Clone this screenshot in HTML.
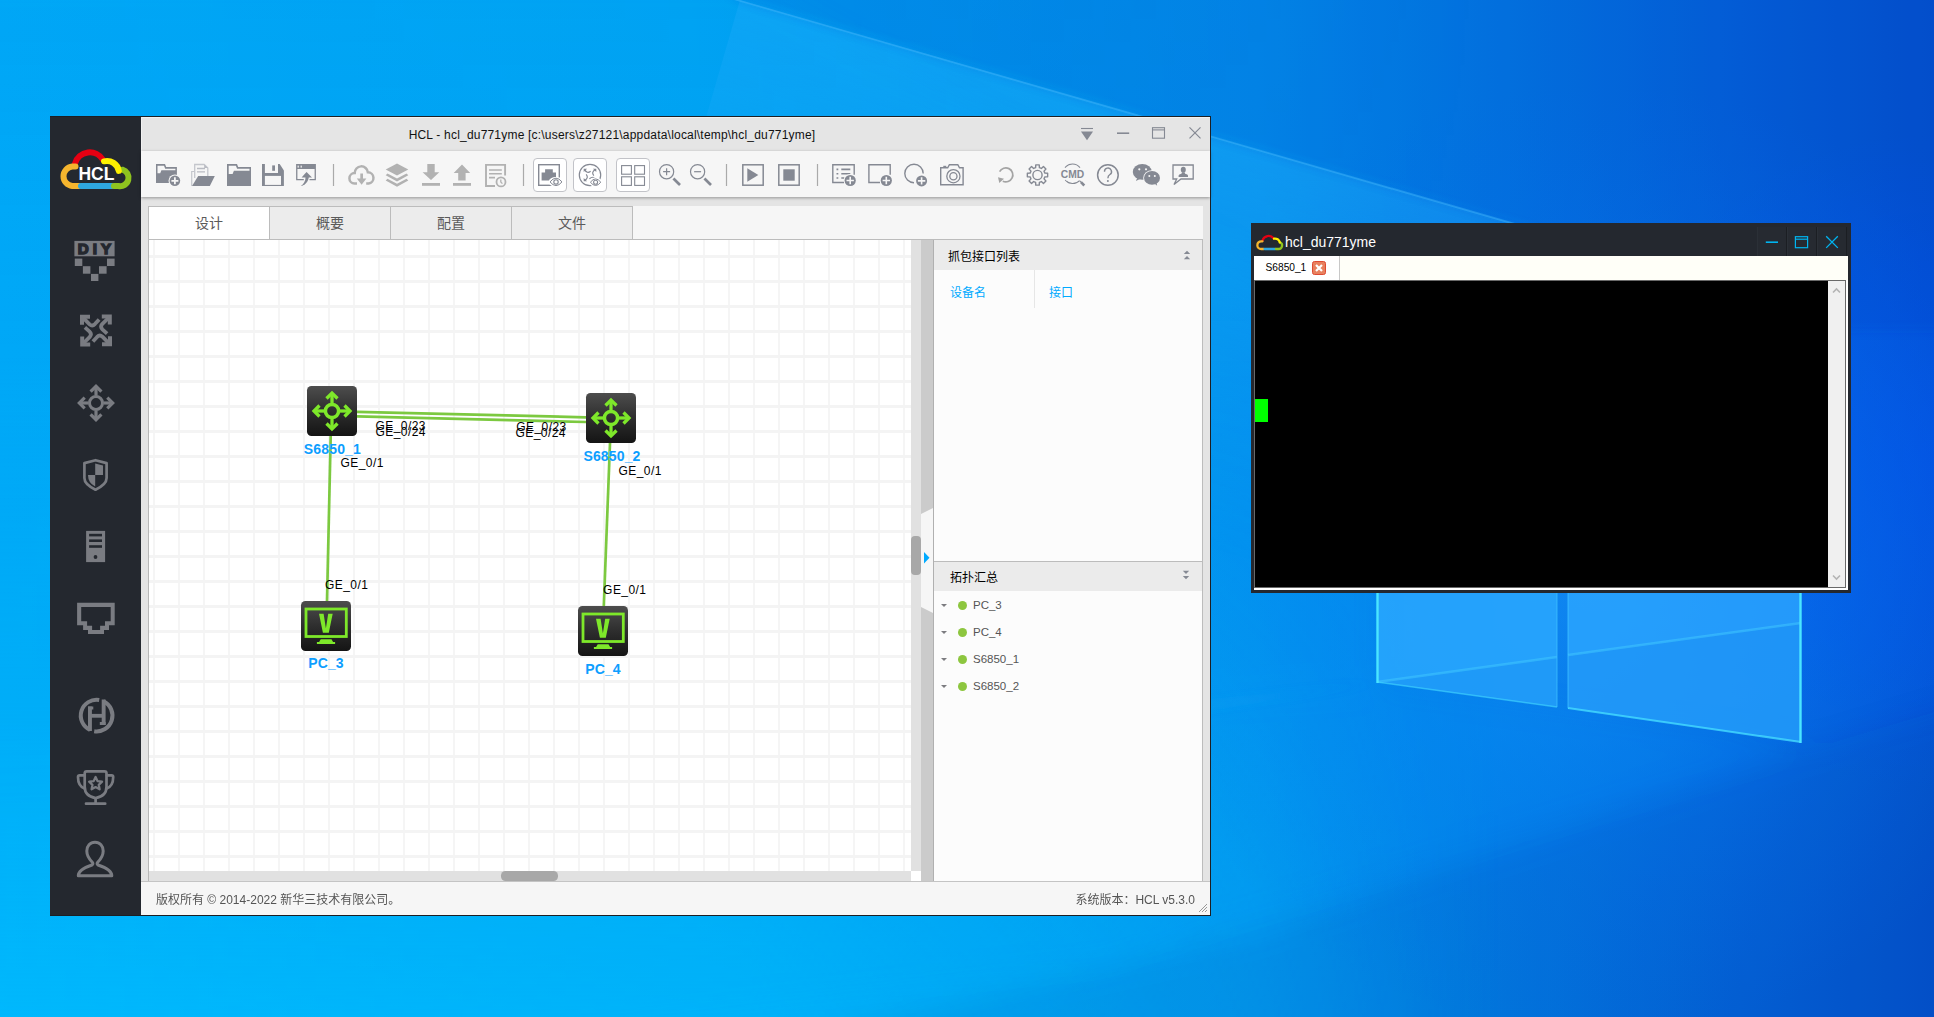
<!DOCTYPE html>
<html lang="zh-CN">
<head>
<meta charset="utf-8">
<title>HCL</title>
<style>
*{box-sizing:border-box;margin:0;padding:0}
html,body{width:1934px;height:1017px;overflow:hidden}
body{position:relative;font-family:"Liberation Sans","Noto Sans CJK SC",sans-serif;font-size:12px;color:#333;
background:#0a8ee8;}
.abs{position:absolute}
#wall{position:absolute;left:0;top:0;width:1934px;height:1017px}
/* HCL window */
#hcl{position:absolute;left:50px;top:116px;width:1161px;height:800px;background:#e4e4e4}
#hcl .frame{position:absolute;left:0;top:0;width:1161px;height:800px;border:1px solid #1c1f24;border-left:none;pointer-events:none}
#side{position:absolute;left:0;top:0;width:91px;height:799px;background:#24282f}
#title{position:absolute;left:91px;top:0;width:1069px;height:35px;background:#e5e5e5;border-top:2px solid #f1f1f1;border-left:1px solid #f1f1f1}
#title .t{position:absolute;left:-1px;width:942px;top:10px;text-align:center;font-size:12px;color:#111;letter-spacing:0.2px;white-space:nowrap}
#tool{position:absolute;left:91px;top:35px;width:1069px;height:46px;background:#f6f6f6;box-shadow:0 1px 3px rgba(0,0,0,.35)}
#tabs{position:absolute;left:98px;top:90px;height:34px;width:1055px;background:#f6f6f6;border-bottom:1px solid #bcbcbc}
.tab{position:absolute;top:0;height:34px;width:121px;background:#ececec;border:1px solid #bcbcbc;border-left:none;text-align:center;line-height:32px;font-size:14px;color:#5a5a5a}
.tab.on{background:#fff;border-left:1px solid #bcbcbc}
#canvas{position:absolute;left:99px;top:124px;width:762px;height:631px;background:#fff;overflow:hidden}
#cleft{position:absolute;left:98px;top:124px;width:1px;height:642px;background:#b8b8b8}
#vs{position:absolute;left:861px;top:124px;width:10px;height:631px;background:#e1e1e1}
#vs i{position:absolute;left:0;top:296px;width:10px;height:39px;border-radius:4px;background:#a8a8a8}
#hs{position:absolute;left:99px;top:755px;width:762px;height:10px;background:#e1e1e1}
#hs i{position:absolute;left:352px;top:0;width:57px;height:10px;border-radius:4.5px;background:#a8a8a8}
#corner{position:absolute;left:861px;top:755px;width:10px;height:10px;background:#fff}
#split{position:absolute;left:871px;top:124px;width:12px;height:642px;background:#cbcbcb}
#rb{position:absolute;left:883px;top:124px;width:1px;height:642px;background:#b0b0b0}
#status{position:absolute;left:91px;top:765px;width:1069px;height:34px;background:#f6f6f6;border-top:1px solid #c4c4c4;font-size:12px;color:#555;line-height:36px}
#status .l{position:absolute;left:15px;top:0;white-space:nowrap}
#status .r{position:absolute;right:15px;top:0;white-space:nowrap}
#right{position:absolute;left:884px;top:124px;width:269px;height:641px;background:#fcfcfc;border-right:1px solid #bcbcbc;font-size:12px}
.ph{position:absolute;left:0;width:268px;height:30px;background:#ebebeb;color:#000;line-height:30px;padding-left:14px}
.col{position:absolute;top:30px;height:38px;line-height:46px;color:#00aaff;padding-left:16px}
.row{position:absolute;left:0;width:268px;height:27px;line-height:27px;color:#555;font-size:11.5px}
.row .a{position:absolute;left:7px;top:12px;width:0;height:0;border-left:3.5px solid transparent;border-right:3.5px solid transparent;border-top:3.5px solid #7c7c80}
.row .d{position:absolute;left:24px;top:9px;width:9px;height:9px;border-radius:50%;background:#8dc63f}
.row .n{position:absolute;left:39px;top:0}
/* terminal */
#term{position:absolute;left:1251px;top:223px;width:600px;height:370px;background:#24282f}
#term .tt{position:absolute;left:34px;top:11px;font-size:14px;color:#fff;white-space:nowrap;line-height:16px}
#term .btn{position:absolute;top:4px;width:30px;height:29px;background:#262a31;border-right:1px solid #1b1e23;border-left:1px solid #2b3037}
#term .in{position:absolute;left:3px;top:33px;width:594px;height:334px;background:#fff}
#term .tabbar{position:absolute;left:0;top:0;width:594px;height:24px;background:#fffff8}
#term .tab1{position:absolute;left:0;top:0;width:86px;height:24px;background:#fff;border-right:1px solid #c8c8c8;font-size:10.2px;color:#000;line-height:24px;padding-left:11.5px}
#term .x{position:absolute;left:58px;top:5px;width:14px;height:14px;border-radius:2.5px;background:#e8805e;border:1px solid #de4a32}
#term .scr{position:absolute;left:0;top:24px;width:592px;height:308px;background:#000;border-left:1px solid #696969;border-top:1px solid #696969;border-right:1px solid #696969;border-bottom:1px solid #696969}
#term .sb{position:absolute;right:0;top:0;width:17px;height:306px;background:#f0f0f0}
#term .cur{position:absolute;left:0;top:118px;width:13px;height:23px;background:#00ff00}
</style>
</head>
<body>
<svg id="wall" viewBox="0 0 1934 1017">
<defs>
<linearGradient id="bg" x1="0" x2="1934" y1="0" y2="0" gradientUnits="userSpaceOnUse">
 <stop offset="0" stop-color="#00a8f6"/>
 <stop offset="0.36" stop-color="#00a2f2"/>
 <stop offset="0.52" stop-color="#029aee"/>
 <stop offset="0.65" stop-color="#0492ec"/>
 <stop offset="0.78" stop-color="#037ae2"/>
 <stop offset="0.90" stop-color="#0462d8"/>
 <stop offset="1" stop-color="#0452cc"/>
</linearGradient>
<linearGradient id="lowL" x1="0" x2="0" y1="0" y2="1017" gradientUnits="userSpaceOnUse">
 <stop offset="0" stop-color="#0a90ea" stop-opacity="0.06"/>
 <stop offset="0.35" stop-color="#00b0f8" stop-opacity="0"/>
 <stop offset="1" stop-color="#00c0ff" stop-opacity="0.72"/>
</linearGradient>
<linearGradient id="fadeR" x1="0" x2="1500" y1="0" y2="0" gradientUnits="userSpaceOnUse">
 <stop offset="0" stop-color="#fff" stop-opacity="1"/>
 <stop offset="0.5" stop-color="#fff" stop-opacity="0.8"/>
 <stop offset="1" stop-color="#fff" stop-opacity="0"/>
</linearGradient>
<radialGradient id="glow" cx="1600" cy="560" r="480" gradientUnits="userSpaceOnUse">
 <stop offset="0" stop-color="#1a96ff" stop-opacity="0.62"/>
 <stop offset="0.5" stop-color="#0880f6" stop-opacity="0.36"/>
 <stop offset="1" stop-color="#0470ee" stop-opacity="0"/>
</radialGradient>
<radialGradient id="glowR" cx="1930" cy="460" r="330" gradientUnits="userSpaceOnUse">
 <stop offset="0" stop-color="#0050ff" stop-opacity="0.36"/>
 <stop offset="0.6" stop-color="#0050ff" stop-opacity="0.20"/>
 <stop offset="1" stop-color="#0050ff" stop-opacity="0"/>
</radialGradient>
<linearGradient id="rayg" x1="1100" y1="104" x2="989" y2="488" gradientUnits="userSpaceOnUse">
 <stop offset="0" stop-color="#30b0ff" stop-opacity="0.26"/>
 <stop offset="0.5" stop-color="#30b0ff" stop-opacity="0.10"/>
 <stop offset="1" stop-color="#30b0ff" stop-opacity="0"/>
</linearGradient>
<mask id="mL"><rect x="0" y="0" width="1500" height="1017" fill="url(#fadeR)"/></mask>
<filter id="bl" x="-10%" y="-10%" width="120%" height="120%"><feGaussianBlur stdDeviation="14"/></filter>
<filter id="bl2" x="-10%" y="-10%" width="120%" height="120%"><feGaussianBlur stdDeviation="5"/></filter>
</defs>
<rect width="1934" height="1017" fill="url(#bg)"/>
<rect x="0" y="0" width="1500" height="1017" fill="url(#lowL)" mask="url(#mL)"/>
<rect width="1934" height="1017" fill="url(#glow)"/>
<rect x="1500" y="100" width="434" height="720" fill="url(#glowR)"/>
<g filter="url(#bl)">
<!-- light wedge spreading left from logo -->
<polygon points="1377,330 740,-20 -40,-20 -40,780 1377,690" fill="#18b0ff" opacity="0.11"/>
<!-- floor wedge: lighter between bottom rays -->
<polygon points="1377,684 1801,744 1100,960 300,1060 -40,1060 -40,770" fill="#18b0ff" opacity="0.10"/>
<!-- dark lower right -->
<polygon points="1801,752 1974,700 1974,1060 700,1060 1250,935" fill="#0030a0" opacity="0.10"/>
<!-- dark upper right -->

</g>
<polygon points="740,0 1600,248.600 1489,632.600 629,384" fill="url(#rayg)"/>
<polygon points="740,0 1560,236 1560,238 734,0" fill="#4cc0ff" opacity="0.45"/>
<g filter="url(#bl2)"><polygon points="740,0 1600,248 1851,330 1990,330 1990,-30 700,-30" fill="#0038c8" opacity="0.18"/><polygon points="1377,683 1050,722 600,790 600,800 1050,730" fill="#40c0ff" opacity="0.18"/></g>
<!-- logo panes -->
<g>
<polygon points="1377,400 1557,370 1557,707 1377,682" fill="#2caaff" opacity="0.80"/>
<polygon points="1568,368 1801,330 1801,742 1568,708" fill="#2ca6ff" opacity="0.80"/>
<polygon points="1377,682 1557,657 1557,707" fill="#1488ee" opacity="0.30"/>
<polygon points="1568,655 1801,623 1801,742 1568,708" fill="#1488ee" opacity="0.30"/>
<polyline points="1377,682 1557,657" fill="none" stroke="#48d0ff" stroke-width="2.600" opacity="0.45"/>
<polyline points="1568,655 1801,623" fill="none" stroke="#48d0ff" stroke-width="2.600" opacity="0.45"/>
<polyline points="1377,682 1557,707" fill="none" stroke="#48e0ff" stroke-width="1.600" opacity="0.55"/>
<polyline points="1568,708 1801,742" fill="none" stroke="#48e0ff" stroke-width="2" opacity="0.75"/>
<line x1="1377.500" y1="400" x2="1377.500" y2="683" stroke="#4ae6ff" stroke-width="2.400"/>
<line x1="1800.500" y1="330" x2="1800.500" y2="743" stroke="#4ae6ff" stroke-width="2.400"/>
<line x1="1557" y1="370" x2="1557" y2="707" stroke="#3cc0ff" stroke-width="1" opacity="0.8"/>
<line x1="1568" y1="368" x2="1568" y2="708" stroke="#3cc0ff" stroke-width="1" opacity="0.8"/>
</g>
</svg>

<div id="hcl">
  <div id="side"><svg class="abs" style="left:0;top:0" width="91" height="799" viewBox="50 116 91 799">
<!-- logo -->
<g fill="none" stroke-width="6" stroke-linecap="round">
<path d="M75,163.500A15.400,15.400 0 0 1 103,159.800" stroke="#e60012"/>
<path d="M75.500,166.500h-3.200a9.800,9.800 0 0 0 0,19.500h6.700" stroke="#f5b52e"/>
<path d="M81,186h31" stroke="#2ea7e0"/>
<path d="M122.500,169.700a8.400,8.400 0 0 1 -4,16.300h-4.500" stroke="#8fc31f"/>
<path d="M104,161.300a12,12 0 0 1 14.800,9.600" stroke="#fff100"/>
</g>
<text x="96.400" y="179.800" text-anchor="middle" font-family="Liberation Sans, sans-serif" font-weight="700" font-size="18" fill="#fff" textLength="36" lengthAdjust="spacingAndGlyphs">HCL</text>
<g fill="#7a7c82">
<!-- DIY -->
<rect x="74.400" y="240.900" width="40.200" height="15.400"/>
<text x="94.500" y="254.200" text-anchor="middle" font-family="Liberation Sans, sans-serif" font-weight="700" font-size="15.200" fill="#24282f" stroke="#24282f" stroke-width="1.500" textLength="33.500" lengthAdjust="spacing">DIY</text>
<rect x="74.800" y="258.600" width="7.500" height="7.400"/><rect x="107" y="258.600" width="7.600" height="7.400"/>
<rect x="82.900" y="266.200" width="7.500" height="7.500"/><rect x="99" y="266.200" width="7.600" height="7.500"/>
<rect x="91" y="273.900" width="7.400" height="7.100"/>
<!-- router -->
<g id="rarr"><path d="M80,314.700h10v4h-6v6h-4z"/><path d="M83,317.600l6.600,6.700q2.700,2.400 5.300,-0.200l4.200,-4.700" fill="none" stroke="#7a7c82" stroke-width="3.700"/></g>
<use href="#rarr" transform="rotate(90 96 330.500)"/><use href="#rarr" transform="rotate(180 96 330.500)"/><use href="#rarr" transform="rotate(270 96 330.500)"/>
<!-- switch -->
<circle cx="96" cy="403" r="6.500" fill="none" stroke="#7a7c82" stroke-width="3"/>
<g id="sarr" fill="none" stroke="#7a7c82" stroke-width="3.200"><path d="M96,395.500v-8.500"/><path d="M90.600,391.700l5.400,-5.400l5.400,5.400"/></g>
<use href="#sarr" transform="rotate(90 96 403)"/><use href="#sarr" transform="rotate(180 96 403)"/><use href="#sarr" transform="rotate(270 96 403)"/>
<!-- shield -->
<path d="M95.500,460.200l11.100,2.900v15q0,6.500 -11.100,11.600q-11.100,-5.100 -11.100,-11.600v-15z" fill="none" stroke="#7a7c82" stroke-width="2.700" stroke-linejoin="round"/>
<path d="M95.200,463.600l7.800,2v9.400h-7.800z"/><path d="M95.200,475v11.600q-7.200,-3.800 -7.200,-11.600z"/>
<!-- server -->
<path d="M86.100,530.900h19v31.200h-19z"/>
<g fill="#24282f"><rect x="89.100" y="533.800" width="12.900" height="2.600"/><rect x="89.100" y="539.400" width="12.900" height="2.600"/><rect x="89.100" y="545.200" width="12.900" height="2.600"/><circle cx="95.500" cy="557" r="1.900"/></g>
<!-- port -->
<path fill-rule="evenodd" d="M77.100,602.700h37.600v22.600h-5.700v4.700h-5v4.100h-16v-4.100h-4.900v-4.700h-6zM81.200,606.900v14.400h5.900v4.500h5v4.200h8v-4.200h4.900v-4.500h5.700v-14.400z"/>
<!-- H -->
<g fill="none" stroke="#7a7c82" stroke-width="4">
<path d="M99.200,700A15.800,15.800 0 0 0 90,729.950"/>
<path d="M94.200,731.200A15.800,15.800 0 0 0 103.600,701.400"/>
</g>
<rect x="88" y="706.500" width="3.900" height="24.500"/><rect x="88" y="706.500" width="5.300" height="3"/>
<rect x="101.700" y="699.500" width="3.900" height="25.500"/><rect x="99.800" y="722" width="5.800" height="3"/>
<rect x="90" y="713.900" width="14" height="3.800"/>
<!-- trophy -->
<g fill="none" stroke="#7a7c82" stroke-width="2.700" stroke-linecap="round" stroke-linejoin="round">
<path d="M84.700,773.300q0,-2 2,-2h17.800q2,0 2,2v13.500q0,9.500 -10.900,11.300q-10.900,-1.800 -10.900,-11.300z"/>
<path d="M95.600,798.300v5.200M86,803.700h19.200"/>
<path d="M84.200,775.300h-4.500q-1.700,0 -1.700,1.700q0,9 6.500,11.500M107,775.300h4.500q1.700,0 1.700,1.700q0,9 -6.500,11.500"/>
</g>
<path d="M95.60,777.00L97.54,781.13L102.07,781.70L98.74,784.82L99.60,789.30L95.60,787.10L91.60,789.30L92.46,784.82L89.13,781.70L93.66,781.13z" fill="none" stroke="#7a7c82" stroke-width="2.300" stroke-linejoin="round"/>
<!-- person -->
<path d="M95,842.200C100,842.200 103.200,846 103.200,851C103.200,856 100.500,859.500 97.500,862.500C97,863.500 97.200,864.500 98,865C104,867 111.800,870 111.800,875.700H78.300C78.300,870 86,867 92,865C92.800,864.500 93,863.500 92.500,862.500C89.500,859.500 86.800,856 86.800,851C86.800,846 90,842.200 95,842.200Z" fill="none" stroke="#7a7c82" stroke-width="3" stroke-linejoin="round"/>
</g>
</svg></div>
  <div id="title"><div class="t">HCL - hcl_du771yme [c:\users\z27121\appdata\local\temp\hcl_du771yme]</div>
<svg class="abs" style="left:-1px;top:-2px" width="1069" height="35" viewBox="141 116 1069 35">
<g fill="none" stroke="#858993">
<path d="M1081,128.500h12" stroke-width="1.100"/>
<path d="M1081,131.400h12l-6,8.800z" fill="#858993" stroke="none"/>
<path d="M1117,133.200h12.200" stroke-width="1.600"/>
<rect x="1152.500" y="127.700" width="12" height="10.500" stroke-width="1.100"/><path d="M1152.500,129.900h12" stroke-width="1.100"/>
<path d="M1189.500,127.400l11,11M1200.500,127.400l-11,11" stroke-width="1.200"/>
</g></svg></div>
  <div id="tool"><svg class="abs" style="left:0;top:0" width="1069" height="46" viewBox="141 151 1069 46">
<g id="tb1" fill="#858993">
<!-- new project -->
<path d="M156,164h9l1.2,3h10.7v16h-20.9z"/>
<path d="M157.5,165.7h6.5l1.2,3h10.2v1.6h-14l-1.2,3h-2.7z" fill="#f6f6f6"/>
<circle cx="174.9" cy="180.8" r="6.4" fill="#f6f6f6"/>
<circle cx="174.9" cy="180.8" r="5.3"/>
<path d="M174,177.3h1.8v2.6h2.6v1.8h-2.6v2.6h-1.8v-2.6h-2.6v-1.8h2.6z" fill="#f6f6f6"/>
<!-- open -->
<path d="M191.7,186v-14.5h3" fill="none" stroke="#c4c6cc" stroke-width="1.2"/>
<path d="M194.7,178v-13.5h9.5l3.6,3.6v8" fill="#f6f6f6" stroke="#c4c6cc" stroke-width="1.3"/>
<path d="M204.2,164.5v3.6h3.6z" fill="#b9bbc2"/>
<path d="M197,168.5h8M197,171.8h8" stroke="#b9bbc2" stroke-width="1.3"/>
<path d="M198.2,176h16.6l-5,10h-17.8z"/>
<!-- folder -->
<path d="M227,164h10l1.2,3h12.8v19h-24z"/>
<path d="M228.7,165.7h7.2l1.2,3h12.4v2h-15.6l-1.3,3.4h-3.9z" fill="#f6f6f6"/>
<!-- save -->
<path d="M262,164h17.7l4.2,6.6v15.3h-21.9z"/>
<path d="M264.9,164h13.1v9h-13.1z" fill="#f6f6f6"/>
<rect x="272.2" y="165.4" width="2.8" height="5.4"/>
<rect x="264.9" y="175.9" width="16.1" height="9" fill="#f6f6f6"/>
<!-- export -->
<path d="M296.1,164h19.8v16.2h-6.4v-1.3h5.1v-10h-17.2v10h6.4v1.3h-7.7z"/>
<rect x="297.6" y="165.6" width="1.2" height="2" fill="#f6f6f6"/><rect x="300.6" y="165.6" width="1.2" height="2" fill="#f6f6f6"/>
<path d="M306.6,171.9l5.4,5.7h-3.2c-0.6,4.6-3.6,7.5-8,8.4c2.8-1.8,4.6-4.4,4.7-8.4h-3.9z"/>
</g>
<path d="M333.5,164v22M523.5,164v22M726.5,164v22M817.5,164v22" stroke="#aaa" stroke-width="1.2"/>
<g id="tb2" fill="#b2b2b2">
<!-- cloud download -->
<path d="M357,183.500H354.500A5.200,5.200 0 0 1 354.700,173.100A6.600,6.600 0 0 1 367.870,172.350A5.600,5.600 0 0 1 368.600,183.500H366.200" fill="none" stroke="#b2b2b2" stroke-width="2.500"/>
<path d="M360.3,173.6h2.7v5h3.4l-4.8,6.1l-4.8,-6.1h3.5z"/>
<!-- layers -->
<path d="M397,163.6l11.3,5.9l-11.3,6.1l-11.3,-6.1z"/>
<path d="M385.7,175.2l1.8,-1.6l9.5,5l9.5,-5l1.8,1.6l-11.3,6.3z"/>
<path d="M385.7,180.4l1.8,-1.6l9.5,5l9.5,-5l1.8,1.6l-11.3,6.3z"/>
<!-- download -->
<path d="M427.3,164h7.4v8.2h4.6l-8.3,7.8l-8.4,-7.8h4.7z"/><rect x="422" y="183" width="18" height="2.8"/>
<!-- upload -->
<path d="M462,164.4l8.2,8.5h-4.6v7.6h-7.4v-7.6h-4.5z"/><rect x="453" y="183" width="18" height="2.8"/>
<!-- doc clock -->
<path d="M495,186h-9v-21.1h19.1v10.7" fill="none" stroke="#b2b2b2" stroke-width="1.9"/>
<path d="M489,170h12.8M489,173.8h12.8M489,177.6h6" stroke="#b2b2b2" stroke-width="1.6" fill="none"/>
<circle cx="501" cy="181.9" r="4.5" fill="#f6f6f6" stroke="#b2b2b2" stroke-width="1.8"/>
<path d="M500.8,179.4v2.6l1.6,1.6" fill="none" stroke="#b2b2b2" stroke-width="1.3"/>
</g>
<g id="tb3" fill="#858993" stroke="none">
<rect x="533.5" y="158.5" width="33" height="33" rx="3.5" fill="#fff" stroke="#c2c3c8" stroke-width="1"/>
<rect x="573.5" y="158.5" width="33" height="33" rx="3.5" fill="#fff" stroke="#c2c3c8" stroke-width="1"/>
<rect x="616.5" y="158.5" width="33" height="33" rx="3.5" fill="#fff" stroke="#c2c3c8" stroke-width="1"/>
<!-- port eye -->
<rect x="538.7" y="164.7" width="20.6" height="20.6" fill="none" stroke="#858993" stroke-width="1.4"/>
<path d="M545.1,169.2h7.7v3.3h3.2v7.9h-14.4v-7.9h3.5z"/>
<ellipse cx="556" cy="181.9" rx="7.2" ry="5" fill="#fff"/>
<path d="M550,181.9q6,-7.4 12,0q-6,7.4 -12,0z" fill="#fff" stroke="#858993" stroke-width="1"/>
<circle cx="556" cy="181.9" r="2.2" fill="#fff" stroke="#858993" stroke-width="1.1"/>
<!-- topo eye -->
<circle cx="590" cy="175" r="10.7" fill="none" stroke="#858993" stroke-width="1.2"/>
<g fill="none" stroke="#858993" stroke-width="1.2">
<path d="M584.6,169.6q2.5,4.5 6,1.6M595.4,169.6q-4.5,2.5 -1.6,6M584.6,180.4q4.5,-2.500 1.6,-6M589.4,178.8q3,-2.500 5,-1"/>
</g>
<path d="M583.7,168.7h3.400l-3.400,3.400zM596.3,168.7v3.400l-3.400,-3.400zM583.7,181.3v-3.400l3.400,3.400z"/>
<ellipse cx="595.6" cy="182.2" rx="6.4" ry="4.6" fill="#fff"/>
<path d="M590.4,182.2q5.2,-6.600 10.400,0q-5.200,6.600 -10.400,0z" fill="#fff" stroke="#858993" stroke-width="1"/>
<circle cx="595.6" cy="182.2" r="2" fill="#fff" stroke="#858993" stroke-width="1.1"/>
<!-- grid -->
<g fill="none" stroke="#858993" stroke-width="1.1">
<rect x="621.6" y="165.6" width="9.8" height="8.6"/><rect x="634.7" y="165.6" width="9.8" height="8.6"/>
<rect x="621.6" y="176.800" width="9.8" height="8.6"/><rect x="634.7" y="176.800" width="9.8" height="8.6"/>
</g>
<!-- zoom in/out -->
<g fill="none" stroke="#858993">
<circle cx="666.6" cy="171.7" r="7.1" stroke-width="1.2"/><path d="M663.1,171.7h7M666.6,168.2v7" stroke-width="1.2"/>
<path d="M673.4,178.6l6.600,6.300" stroke-width="2.7"/>
<circle cx="697.6" cy="171.7" r="7.1" stroke-width="1.2"/><path d="M694.1,171.7h7" stroke-width="1.2"/>
<path d="M704.4,178.6l6.600,6.300" stroke-width="2.7"/>
</g>
</g>
<g id="tb4" fill="#858993">
<!-- play / stop -->
<rect x="742.8" y="164.8" width="20.4" height="20.4" fill="none" stroke="#858993" stroke-width="1.5"/>
<path d="M747.3,168.3l11,6.700l-11,6.700z"/>
<rect x="778.8" y="164.8" width="20.4" height="20.4" fill="none" stroke="#858993" stroke-width="1.5"/>
<rect x="783.3" y="169.3" width="11.400" height="11.400"/>
<!-- list + -->
<path d="M844,182.5h-11.200v-17.800h21.400v10" fill="none" stroke="#858993" stroke-width="1.4"/>
<path d="M836.500,169.400h1.800M836.500,173.700h1.800M836.500,178h1.800M841.300,169.400h9M841.300,173.700h9M841.300,178h3" stroke="#858993" stroke-width="1.600" fill="none"/>
<circle cx="850.200" cy="180.500" r="6.500" fill="#f6f6f6"/><circle cx="850.200" cy="180.500" r="5.600"/>
<path d="M849.400,176.800h1.600v2.900h2.900v1.600h-2.900v2.900h-1.600v-2.900h-2.900v-1.600h2.900z" fill="#f6f6f6"/>
<!-- rect + -->
<path d="M880,182.500h-11.100v-17.800h21.300v10" fill="none" stroke="#858993" stroke-width="1.400"/>
<circle cx="886.300" cy="180.500" r="6.500" fill="#f6f6f6"/><circle cx="886.300" cy="180.500" r="5.600"/>
<path d="M885.500,176.800h1.600v2.900h2.900v1.600h-2.900v2.900h-1.600v-2.900h-2.900v-1.600h2.900z" fill="#f6f6f6"/>
<!-- circle + -->
<path d="M914,182.700a9.200,9.200 0 1 1 9.200,-9.200" fill="none" stroke="#858993" stroke-width="1.400"/>
<circle cx="921.600" cy="180.900" r="6.400" fill="#f6f6f6"/><circle cx="921.600" cy="180.900" r="5.500"/>
<path d="M920.800,177.200h1.600v2.900h2.900v1.600h-2.900v2.900h-1.600v-2.900h-2.900v-1.600h2.900z" fill="#f6f6f6"/>
<!-- camera -->
<path d="M940.700,184.800v-17h7l1.700,-3.100h8.400l1.700,3.100h3.600v17z" fill="none" stroke="#858993" stroke-width="1.400"/>
<rect x="943.300" y="165.800" width="3" height="1.800"/>
<circle cx="953.400" cy="176.200" r="6.600" fill="none" stroke="#858993" stroke-width="1.300"/>
<circle cx="953.400" cy="176.200" r="3.600" fill="none" stroke="#858993" stroke-width="1.300"/>
</g>
<g id="tb5" fill="#858993">
<!-- refresh -->
<path d="M999.6,171.700a7,7 0 1 1 3.200,9.500" fill="none" stroke="#a4a4a4" stroke-width="1.700"/>
<path d="M998,177.200l6,1.600l-4.700,4.200z" fill="#a4a4a4"/>
<!-- gear -->
<path d="M1035.62,167.64L1035.76,164.85L1039.24,164.85L1039.38,167.64L1041.38,168.46L1043.45,166.59L1045.91,169.05L1044.04,171.12L1044.86,173.12L1047.65,173.26L1047.65,176.74L1044.86,176.88L1044.04,178.88L1045.91,180.95L1043.45,183.41L1041.38,181.54L1039.38,182.36L1039.24,185.15L1035.76,185.15L1035.62,182.36L1033.62,181.54L1031.55,183.41L1029.09,180.95L1030.96,178.88L1030.14,176.88L1027.35,176.74L1027.35,173.26L1030.14,173.12L1030.96,171.12L1029.09,169.05L1031.55,166.59L1033.62,168.46z" fill="none" stroke="#858993" stroke-width="1.400" stroke-linejoin="round"/>
<circle cx="1037.500" cy="175" r="4.600" fill="none" stroke="#858993" stroke-width="1.400"/>
<!-- cmd -->
<path d="M1065,167.600a9.600,9.600 0 0 1 15,0M1065.200,180a9.600,9.600 0 0 0 14.400,0.600" fill="none" stroke="#858993" stroke-width="1.100"/>
<path d="M1079.800,180.800l1.500,1.500" stroke="#858993" stroke-width="1.100"/>
<path d="M1081,182.200l3.300,3.300" stroke="#858993" stroke-width="2.600"/>
<text x="1072.500" y="177.600" text-anchor="middle" font-family="Liberation Sans, sans-serif" font-weight="700" font-size="10.300" textLength="23.400" lengthAdjust="spacingAndGlyphs">CMD</text>
<!-- help -->
<circle cx="1107.900" cy="175" r="10.300" fill="none" stroke="#858993" stroke-width="1.500"/>
<path d="M1104.500,171.800a3.500,3.500 0 1 1 5.400,2.700q-2,1.300 -2,3.800" fill="none" stroke="#858993" stroke-width="1.400"/>
<circle cx="1107.900" cy="181.100" r="1"/>
<!-- wechat -->
<ellipse cx="1142.300" cy="171.900" rx="9.500" ry="7.900"/>
<path d="M1137.200,178l-1.300,3l4,-2z"/>
<circle cx="1139.300" cy="169.300" r="1.100" fill="#f6f6f6"/><circle cx="1146" cy="169.300" r="1.100" fill="#f6f6f6"/>
<ellipse cx="1152" cy="177.900" rx="8.800" ry="7.600" fill="#f6f6f6"/>
<ellipse cx="1152" cy="177.900" rx="8" ry="6.800"/>
<path d="M1154.500,183.500l2.600,2.300l-0.500,-3.300z"/>
<circle cx="1149.300" cy="176.100" r="1" fill="#f6f6f6"/><circle cx="1154.800" cy="176.100" r="1" fill="#f6f6f6"/>
<!-- person chat -->
<path d="M1176.700,179h-3.700v-14h20.200v14h-12.200l-7,5.600z" fill="none" stroke="#858993" stroke-width="1.300"/>
<ellipse cx="1183.300" cy="169.700" rx="2.500" ry="2.900"/>
<path d="M1178.600,177v-1.500q0,-1.200 2.800,-1.800l0.700,-1.500h2.400l0.700,1.500q2.800,0.600 2.800,1.800v1.500z"/>
</g>
</svg></div>
  <div id="tabs">
    <div class="tab on" style="left:0;width:122px">设计</div>
    <div class="tab" style="left:122px">概要</div>
    <div class="tab" style="left:243px">配置</div>
    <div class="tab" style="left:364px">文件</div>
  </div>
  <div id="canvas"><svg class="abs" style="left:0;top:0" width="762" height="631" viewBox="149 240 762 631">
<defs>
<pattern id="grid" x="153" y="255" width="25" height="25" patternUnits="userSpaceOnUse"><rect x="0" y="0" width="2" height="25" fill="#f5f5f5"/><rect x="0" y="0" width="25" height="3" fill="#f4f4f4"/></pattern>
<linearGradient id="devg" x1="0" x2="0" y1="0" y2="1"><stop offset="0" stop-color="#4d4d4d"/><stop offset="0.5" stop-color="#2e2e2e"/><stop offset="1" stop-color="#141414"/></linearGradient>
</defs>
<rect x="149" y="239" width="762" height="632" fill="#fff"/>
<rect x="149" y="239" width="762" height="632" fill="url(#grid)"/>
<g stroke="#7cc940" stroke-width="2.700" fill="none">
<path d="M357,411.800L586,417.300"/><path d="M357,416.400L586,422"/>
<path d="M330.700,436L327,601"/><path d="M610,443L603.800,606"/>
</g>
<g transform="translate(307,386)"><rect width="50" height="50" rx="4.500" fill="url(#devg)"/>
<circle cx="25" cy="25" r="6.600" fill="none" stroke="#7ee82a" stroke-width="3.500"/>
<g id="ca1" fill="none" stroke="#7ee82a" stroke-width="3.300"><path d="M25,17v-9.500"/><path d="M19.500,12.500l5.500,-5.500l5.500,5.500"/></g>
<use href="#ca1" transform="rotate(90 25 25)"/><use href="#ca1" transform="rotate(180 25 25)"/><use href="#ca1" transform="rotate(270 25 25)"/></g>
<g transform="translate(586,393)"><rect width="50" height="50" rx="4.500" fill="url(#devg)"/>
<circle cx="25" cy="25" r="6.600" fill="none" stroke="#7ee82a" stroke-width="3.500"/>
<g id="ca2" fill="none" stroke="#7ee82a" stroke-width="3.300"><path d="M25,17v-9.500"/><path d="M19.500,12.500l5.500,-5.500l5.500,5.500"/></g>
<use href="#ca2" transform="rotate(90 25 25)"/><use href="#ca2" transform="rotate(180 25 25)"/><use href="#ca2" transform="rotate(270 25 25)"/></g>
<g transform="translate(301,601)"><rect width="50" height="50" rx="4.500" fill="url(#devg)"/>
<rect x="5" y="8" width="40.300" height="27.500" fill="none" stroke="#7ee82a" stroke-width="2.800"/>
<path d="M18,12.800h4.600l2.300,14.500l2.300,-14.500h4.500l-3.900,18.900h-5.900z" fill="#7ee82a"/>
<path d="M19.700,38.200h10.800l1.600,2.700h2v2.200h-18.200v-2.200h2.200z" fill="#7ee82a"/></g>
<g transform="translate(578,606)"><rect width="50" height="50" rx="4.500" fill="url(#devg)"/>
<rect x="5" y="8" width="40.300" height="27.500" fill="none" stroke="#7ee82a" stroke-width="2.800"/>
<path d="M18,12.800h4.600l2.300,14.500l2.300,-14.500h4.500l-3.900,18.900h-5.900z" fill="#7ee82a"/>
<path d="M19.700,38.200h10.800l1.600,2.700h2v2.200h-18.200v-2.200h2.200z" fill="#7ee82a"/></g>
<g font-family="Liberation Sans, sans-serif" font-size="14" font-weight="700" fill="#0d9eff" text-anchor="middle" letter-spacing="0.150">
<text x="332.400" y="453.700">S6850_1</text><text x="612" y="460.600">S6850_2</text>
<text x="326" y="668.400">PC_3</text><text x="603" y="673.800">PC_4</text>
</g>
<g font-family="Liberation Sans, sans-serif" font-size="12" fill="#000" letter-spacing="0.450">
<text x="375.400" y="430.200">GE_0/23</text><text x="375.400" y="436">GE_0/24</text>
<text x="516.200" y="431">GE_0/23</text><text x="515.400" y="436.800">GE_0/24</text>
<text x="340.500" y="467.400">GE_0/1</text><text x="618.400" y="474.600">GE_0/1</text>
<text x="325" y="588.900">GE_0/1</text><text x="603.100" y="593.800">GE_0/1</text>
</g>
</svg></div>
  <div id="cleft"></div>
  <div id="vs"><i></i></div>
  <div id="hs"><i></i></div>
  <div id="corner"></div>
  <div id="split"><svg class="abs" style="left:0;top:0" width="12" height="642" viewBox="921 240 12 642"><path d="M921,514l12,-6v105l-12,-6z" fill="#f6f6f6"/><path d="M924,552l5.500,5.700l-5.500,5.700z" fill="#00aaff"/></svg></div>
  <div id="rb"></div>
  <div id="right">
    <div class="ph" style="top:0;line-height:35px">抓包接口列表</div>
    <svg class="abs" style="left:248px;top:9px" width="10" height="12" viewBox="0 0 10 12"><path d="M5,1.800l3.200,3.200h-6.400zM5,7l3.200,3.200h-6.400z" fill="#858993"/></svg>
    <div class="col" style="left:0;width:101px;border-right:1px solid #e6e6e6">设备名</div>
    <div class="col" style="left:101px;width:167px;padding-left:14px">接口</div>
    <div class="ph" style="top:321px;border-top:1px solid #bcbcbc;height:30px;line-height:33px;padding-left:16px">拓扑汇总</div>
    <svg class="abs" style="left:247px;top:329px" width="10" height="12" viewBox="0 0 10 12"><path d="M5,5l3.200,-3.200h-6.400zM5,10.200l3.200,-3.200h-6.400z" fill="#858993"/></svg>
    <div class="row" style="top:352px"><i class="a"></i><i class="d"></i><span class="n">PC_3</span></div>
    <div class="row" style="top:379px"><i class="a"></i><i class="d"></i><span class="n">PC_4</span></div>
    <div class="row" style="top:406px"><i class="a"></i><i class="d"></i><span class="n">S6850_1</span></div>
    <div class="row" style="top:433px"><i class="a"></i><i class="d"></i><span class="n">S6850_2</span></div>
  </div>
  <div id="status"><span class="l">版权所有 © 2014-2022 新华三技术有限公司。</span><span class="r">系统版本：HCL v5.3.0</span>
  <svg class="abs" style="right:2px;bottom:2px" width="11" height="11" viewBox="0 0 11 11"><path d="M10,2L2,10M10,5L5,10M10,8L8,10" stroke="#999" stroke-width="1"/></svg></div>
  <div class="frame"></div>
</div>

<div id="term">
  <svg class="abs" style="left:4px;top:9px" width="30" height="20" viewBox="1255 232 30 20">
  <g fill="none" stroke-width="2.300" stroke-linecap="round">
  <path d="M1262.500,240.500A6.300,6.300 0 0 1 1273.500,238.300" stroke="#e60012"/>
  <path d="M1262.500,241.300h-1.300a3.800,3.800 0 0 0 0,7.700h2.500" stroke="#f5b52e"/>
  <path d="M1264.500,249h11" stroke="#2ea7e0"/>
  <path d="M1280,242.300a3.500,3.500 0 0 1 -1.500,6.700h-2.500" stroke="#8fc31f"/>
  <path d="M1274,238.700a4.800,4.800 0 0 1 5.800,3.700" stroke="#fff100"/>
  </g></svg>
  <div class="tt">hcl_du771yme</div>
  <div class="btn" style="left:506px"></div><div class="btn" style="left:536px"></div><div class="btn" style="left:566px"></div>
  <svg class="abs" style="left:506px;top:4px" width="90" height="29" viewBox="1757 227 90 29">
  <g fill="none" stroke="#00b4f0">
  <path d="M1765.800,242.200h12.200" stroke-width="1.600"/>
  <rect x="1795.400" y="236.700" width="12.200" height="11" stroke-width="1.200"/><path d="M1795.400,239.200h12.200" stroke-width="1.200"/>
  <path d="M1826.200,236.300l11.600,11.600M1837.800,236.300l-11.600,11.600" stroke-width="1.300"/>
  </g></svg>
  <div class="in">
    <div class="tabbar"><div class="tab1">S6850_1<div class="x"><svg class="abs" style="left:0;top:0" width="12" height="12" viewBox="0 0 12 12"><path d="M3,3l6,6M9,3l-6,6" stroke="#fff" stroke-width="2.200"/></svg></div></div></div>
    <div class="scr"><div class="cur"></div><div class="sb"><svg class="abs" style="left:0;top:0" width="17" height="306" viewBox="0 0 17 306"><path d="M5,11.500l3.500,-3.500l3.500,3.500M5,294.500l3.500,3.500l3.500,-3.500" fill="none" stroke="#b4b4b4" stroke-width="1.600"/></svg></div></div>
  </div>
</div>
</body>
</html>
